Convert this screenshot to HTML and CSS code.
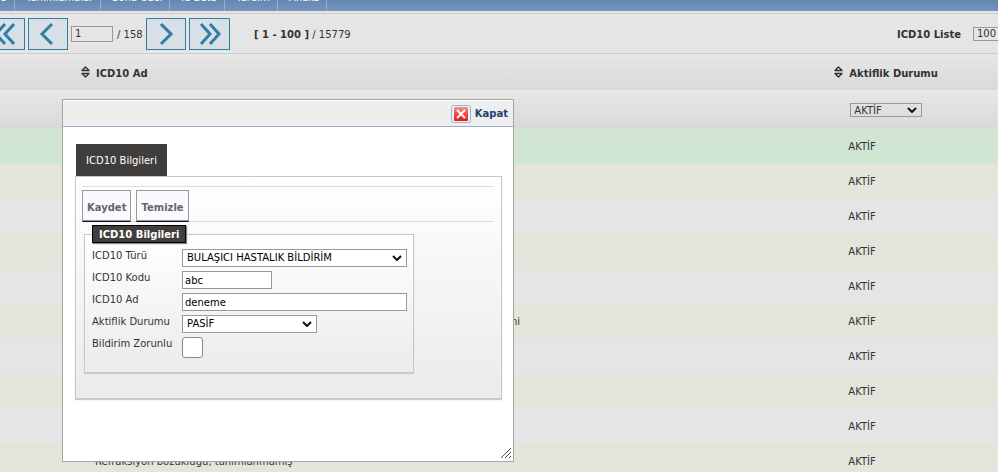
FILE: index.html
```html
<!DOCTYPE html>
<html lang="tr">
<head>
  <meta charset="UTF-8">
  <title>ICD10 Liste</title>
  <link rel="stylesheet" href="styles.css">
</head>
<body>
  <nav class="menu">
    <a href="#" class="first">e</a>
    <a href="#" class="m1">Tanımlamalar</a>
    <a href="#" class="m2">Sonu Özel</a>
    <a href="#" class="m3">Id Beta</a>
    <a href="#" class="m4">Yardım</a>
    <a href="#" class="m5">Analiz</a>
  </nav>

  <div class="pager">
    <button type="button" class="page-btn clipped" aria-label="İlk sayfa">
      <svg width="22" height="24" viewBox="0 0 22 24"><path d="M11 2 2 12l9 10M20 2l-9 10 9 10"/></svg>
    </button>
    <button type="button" class="page-btn" aria-label="Önceki sayfa">
      <svg width="22" height="24" viewBox="0 0 22 24"><path d="M15 2 5 12l10 10"/></svg>
    </button>
    <input type="text" class="page-no" value="1" aria-label="Sayfa">
    <span class="page-total">/ 158</span>
    <button type="button" class="page-btn" aria-label="Sonraki sayfa">
      <svg width="22" height="24" viewBox="0 0 22 24"><path d="M6 2l10 10L6 22"/></svg>
    </button>
    <button type="button" class="page-btn last" aria-label="Son sayfa">
      <svg width="22" height="24" viewBox="0 0 22 24"><path d="M2 2l9 10-9 10M11 2l9 10-9 10"/></svg>
    </button>
    <span class="range"><b>[ 1 - 100 ]</b> / 15779</span>
    <label class="list-label" for="pageSize">ICD10 Liste</label>
    <select id="pageSize" class="page-size"><option>100</option></select>
  </div>

  <table class="list">
    <thead>
      <tr class="head">
        <th class="name"><svg class="sort" width="9" height="12" viewBox="0 0 9 12"><path d="M1 4.500 4.500 1 8 4.500zM1 7.500 4.500 11 8 7.500z"/></svg>ICD10 Ad</th>
        <th><svg class="sort" width="9" height="12" viewBox="0 0 9 12"><path d="M1 4.500 4.500 1 8 4.500zM1 7.500 4.500 11 8 7.500z"/></svg>Aktiflik Durumu</th>
      </tr>
      <tr class="filter">
        <td></td>
        <td><select class="state-filter" aria-label="Aktiflik Durumu"><option>AKTİF</option></select></td>
      </tr>
    </thead>
    <tbody>
      <tr class="selected"><td></td><td>AKTİF</td></tr>
      <tr><td></td><td>AKTİF</td></tr>
      <tr><td></td><td>AKTİF</td></tr>
      <tr><td></td><td>AKTİF</td></tr>
      <tr><td></td><td>AKTİF</td></tr>
      <tr><td class="tail">ni</td><td>AKTİF</td></tr>
      <tr><td></td><td>AKTİF</td></tr>
      <tr><td></td><td>AKTİF</td></tr>
      <tr><td></td><td>AKTİF</td></tr>
      <tr><td>Refraksiyon bozukluğu, tanımlanmamış</td><td>AKTİF</td></tr>
    </tbody>
  </table>

  <div class="dialog" role="dialog" aria-label="ICD10 Bilgileri">
    <div class="dialog-bar">
      <button type="button" class="close">
        <svg width="20" height="20" viewBox="0 0 20 20">
          <defs>
            <linearGradient id="red" x1="0" y1="0" x2="0" y2="1">
              <stop offset="0" stop-color="#f4978c"/>
              <stop offset=".5" stop-color="#e84a42"/>
              <stop offset="1" stop-color="#e01f1c"/>
            </linearGradient>
          </defs>
          <rect x=".5" y="1.500" width="19" height="17" rx="2" fill="#eaf0fa" stroke="#9fb4d8"/>
          <rect x="3" y="3" width="14" height="14" rx="1" fill="url(#red)"/>
          <path d="M6 6l8 8M14 6l-8 8" stroke="#fff" stroke-width="1.800"/>
        </svg>
        Kapat
      </button>
    </div>
    <div class="dialog-body">
      <div class="tab">ICD10 Bilgileri</div>
      <form class="panel">
        <div class="toolbar">
          <button type="button">Kaydet</button>
          <button type="button">Temizle</button>
        </div>
        <fieldset>
          <legend>ICD10 Bilgileri</legend>
          <div class="fields">
            <label for="type">ICD10 Türü</label>
            <select id="type" class="wide"><option>BULAŞICI HASTALIK BİLDİRİM</option></select>
            <label for="code">ICD10 Kodu</label>
            <input type="text" id="code" class="narrow" value="abc">
            <label for="name">ICD10 Ad</label>
            <input type="text" id="name" class="wide" value="deneme">
            <label for="state">Aktiflik Durumu</label>
            <select id="state" class="medium"><option>PASİF</option></select>
            <label for="required">Bildirim Zorunlu</label>
            <input type="checkbox" id="required">
          </div>
        </fieldset>
      </form>
    </div>
    <svg class="grip" width="12" height="12" viewBox="0 0 12 12"><path d="M1 11 11 1M5 11l6-6M9 11l2-2"/></svg>
  </div>
</body>
</html>
```
FILE: styles.css
```css
* {
  box-sizing: border-box;
}

body {
  margin: 0;
  min-height: 100vh;
  overflow: hidden;
  position: relative;
  background: #e5e5e5;
  color: #333;
  font: 10px "DejaVu Sans", Verdana, sans-serif;
}

button, input, select {
  font: inherit;
  color: inherit;
  margin: 0;
}

/* top menu, scrolled partly out of view */
.menu {
  display: flex;
  height: 12px;
  overflow: hidden;
  border-bottom: 1px solid #e5e5e5;
  background: linear-gradient(#6486b0, #7395bf);
}

.menu a {
  flex: none;
  height: 20px;
  margin-top: -8px;
  padding-left: 11px;
  border-right: 1px solid #a5adb5;
  color: #fff;
  line-height: 12px;
  text-decoration: none;
  white-space: nowrap;
}

.menu .first { width: 15px; padding-left: 0; }
.menu .m1 { width: 86px; }
.menu .m2 { width: 69px; }
.menu .m3 { width: 55px; }
.menu .m4 { width: 53px; }
.menu .m5 { width: 49px; }

.pager {
  display: flex;
  align-items: center;
  height: 41px;
  margin-top: 1px;
  border-top: 1px solid #ccc;
  border-bottom: 1px solid #ccc;
  line-height: 16px;
  white-space: nowrap;
  overflow: hidden;
}

.page-btn {
  flex: none;
  display: flex;
  align-items: center;
  justify-content: center;
  width: 40px;
  height: 32px;
  margin-right: 3px;
  padding: 0;
  border: 1px solid #2f7fa5;
  background: #d8dfe7;
}

.page-btn.clipped { margin-left: -15px; }
.page-btn.last { width: 41px; }

.page-btn path {
  fill: none;
  stroke: #2f7fa5;
  stroke-width: 3;
}

.page-no {
  width: 42px;
  height: 16px;
  padding: 0 3px;
  border: 1px solid #999;
  background: transparent;
}

.page-total { width: 33px; padding-left: 4px; }
.page-total, .range, .list-label { padding-top: 2px; }
.range { margin-left: 21px; }
.list-label { margin-left: auto; margin-right: 12px; font-weight: bold; }

.page-size {
  flex: none;
  width: 40px;
  height: 14px;
  margin-right: -15px;
  padding: 0 3px;
  border: 1px solid #999;
  background: transparent;
  line-height: 12px;
  appearance: none;
}

.list {
  width: 100%;
  table-layout: fixed;
  border-collapse: collapse;
}

.list th, .list td {
  padding: 0;
  text-align: left;
}

.list th { font-weight: bold; }
.name { width: 83.6%; }
.list td:first-child { padding-left: 95px; }
.list th:first-child { padding-left: 81px; }
.list td.tail:first-child { padding-left: 511px; }
.list tbody td:last-child { padding-left: 14px; }

.head { height: 36px; }
.head, .filter { background: linear-gradient(#e7e7e7, #d9d9d9); }
.filter { height: 39px; }
.list tbody tr { height: 35px; background: #e5e5e5; }
.list tbody tr:nth-child(even) { background: #e3e5db; }
.list tbody .selected { background: #d0e6d3; }

.sort {
  margin-right: 6px;
  vertical-align: -1px;
  fill: none;
  stroke: #333;
  stroke-width: 1.4;
  stroke-linejoin: round;
}

/* drop-down arrow */
.state-filter, select.wide, .medium {
  appearance: none;
  background: no-repeat right 4px center / 10px 6px url("data:image/svg+xml,%3Csvg xmlns='http://www.w3.org/2000/svg' viewBox='0 0 10 6'%3E%3Cpath d='M1 1l4 4 4-4' fill='none' stroke='%23111' stroke-width='2'/%3E%3C/svg%3E");
}

.state-filter {
  display: block;
  width: 72px;
  height: 14px;
  margin-left: 16px;
  padding: 0 3px;
  border: 1px solid #999;
  line-height: 14px;
}

.dialog {
  position: absolute;
  top: 99px;
  left: 62px;
  width: 452px;
  border: 1px solid #a6a6a6;
  background: #fff;
}

.dialog-bar {
  display: flex;
  justify-content: flex-end;
  height: 27px;
  padding-right: 5px;
  border-top: 1px solid #fff;
  border-bottom: 1px solid #9aafc9;
  background: #eee;
}

.close {
  display: flex;
  align-items: center;
  gap: 4px;
  padding: 0;
  border: 0;
  background: none;
  color: #20426b;
  font-weight: bold;
}

.dialog-body { padding: 17px 11px 62px 12px; }

.tab {
  width: 91px;
  height: 32px;
  margin-left: 1px;
  background: #403e3c;
  color: #fff;
  line-height: 33px;
  text-align: center;
  white-space: nowrap;
}

.panel {
  padding: 9px 7px 25px 6px;
  border: 1px solid #c8c8c8;
  background: linear-gradient(#fff, #ebebeb);
  box-shadow: 0 1px 1px #ccc;
}

.toolbar {
  display: flex;
  gap: 5px;
  height: 36px;
  padding-top: 3px;
  border-top: 1px solid #ddd;
  border-bottom: 1px solid #ddd;
}

.toolbar button {
  height: 32px;
  padding: 2px 4px 0;
  border: 1px solid #999;
  border-bottom-color: #111;
  box-shadow: inset 0 -1px #999;
  background: #f9f9ff;
  color: #666;
  font-weight: bold;
}

fieldset {
  width: 330px;
  margin: 3px 0 0 2px;
  padding: 0 6px 14px 7px;
  border: 1px solid #c8c8c8;
  background: linear-gradient(#fff, #ebebeb);
  box-shadow: 0 1px 1px #ccc;
}

legend {
  height: 18px;
  padding: 0 6px;
  border: 1px solid #000;
  background: #403e3c;
  box-shadow: 1px 1px 1px #888;
  color: #fff;
  font-weight: bold;
  line-height: 17px;
}

.fields {
  display: grid;
  grid-template-columns: 90px 1fr;
  row-gap: 4px;
  padding-top: 6px;
  justify-items: start;
}

.fields label { padding-top: 1px; white-space: nowrap; }

.fields select, .fields input {
  height: 18px;
  border: 1px solid #999;
  background-color: #fff;
  color: #000;
}

.fields select { padding: 0 4px; line-height: 16px; }
.fields input { padding: 1px 2px 0; }
.fields .wide { width: 225px; }
.fields .medium { width: 135px; }
.fields .narrow { width: 90px; }

.fields input[type="checkbox"] {
  width: 21px;
  height: 21px;
  border: 1px solid #888;
  border-radius: 3px;
  appearance: none;
}

.grip {
  position: absolute;
  right: 1px;
  bottom: 2px;
  fill: none;
  stroke: #555;
}
```
